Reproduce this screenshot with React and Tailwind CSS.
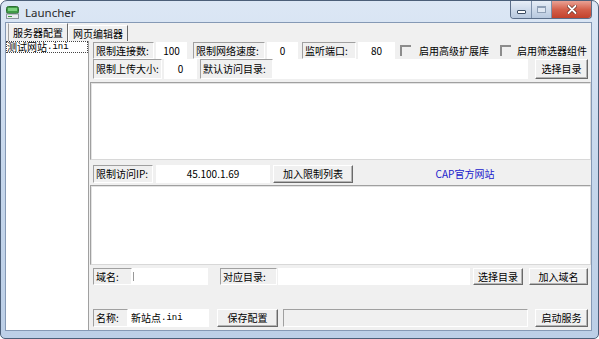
const mono = "font-['Liberation_Mono',monospace] text-[9px]";

function AppIcon() {
  return (
    <svg width="13" height="13" viewBox="0 0 13 13" className="ml-[5px] mt-[5px] shrink-0">
      <rect x="0.5" y="0.5" width="12" height="7" rx="2" fill="#3f9b45" stroke="#2d6e33" />
      <rect x="2" y="2" width="9" height="3" fill="#7cd07e" />
      <rect x="0.5" y="8" width="12" height="4.5" fill="#e9ecef" stroke="#8a939c" />
      <rect x="2" y="10" width="4" height="1" fill="#3f9b45" />
    </svg>
  );
}

function WindowButtons() {
  return (
    <div className="ml-auto mr-[6px] flex h-[18px] self-start overflow-hidden rounded-b-[4px] border border-t-0 border-[#5b6e89]">
      <div className="flex w-[21px] items-center justify-center border-r border-[#7d90aa] bg-linear-to-b from-[#e7eef7] to-[#b7c8de]">
        <div className="mt-[5px] h-[4px] w-[9px] rounded-[1px] border border-[#3c4d63] bg-white" />
      </div>
      <div className="flex w-[20px] items-center justify-center border-r border-[#7d90aa] bg-linear-to-b from-[#e7eef7] to-[#b7c8de]">
        <div className="h-[7px] w-[9px] border border-[#8fa0b6] border-t-2 bg-[#dfe7f2]" />
      </div>
      <div className="flex w-[39px] items-center justify-center bg-linear-to-b from-[#e9a194] via-[#d4604b] to-[#c2422c]">
        <svg width="10" height="9" viewBox="0 0 10 9">
          <path d="M1.5 1 L8.5 8 M8.5 1 L1.5 8" stroke="#5a1d12" strokeWidth="3.2" strokeLinecap="round" />
          <path d="M1.5 1 L8.5 8 M8.5 1 L1.5 8" stroke="#ffffff" strokeWidth="2" strokeLinecap="round" />
        </svg>
      </div>
    </div>
  );
}

function Label({ className = "", children }) {
  return (
    <div
      className={`flex h-full shrink-0 items-center whitespace-nowrap border border-b-white border-l-[#a0a0a0] border-r-white border-t-[#a0a0a0] pl-[2px] ${className}`}
    >
      {children}
    </div>
  );
}

function Field({ className = "", children }) {
  return (
    <div className={`flex h-full shrink-0 items-center whitespace-nowrap bg-white ${className}`}>{children}</div>
  );
}

function Button({ className = "", children }) {
  return (
    <div
      className={`flex h-full shrink-0 items-center justify-center whitespace-nowrap border border-b-[#6a6a6a] border-l-white border-r-[#6a6a6a] border-t-white bg-[#f0f0f0] shadow-[inset_-1px_-1px_0_#b4b4b4] ${className}`}
    >
      {children}
    </div>
  );
}

function Check({ className = "" }) {
  return (
    <div
      className={`h-[11px] w-[11px] shrink-0 border-2 border-b-0 border-r-0 border-l-[#8c8c8c] border-t-[#8c8c8c] ${className}`}
    />
  );
}

export default function App() {
  return (
    <div className="h-[339px] w-[599px] bg-white font-['Noto_Sans_CJK_SC',sans-serif] text-[10px] leading-none text-black">
      <div className="flex h-full flex-col rounded-b-[5px] rounded-t-[7px] border border-[#4c5f79] bg-linear-to-b from-[#dce7f5] via-[#c6d7ec] to-[#bccfe7]">
        <div className="flex h-[21px] shrink-0 items-start">
          <AppIcon />
          <span className="ml-[6px] mt-[6px] font-['Noto_Sans',sans-serif] text-[11.5px] leading-none text-[#2a2a2a]">
            Launcher
          </span>
          <WindowButtons />
        </div>

        <div className="mb-[7px] ml-[4px] mr-[6px] flex flex-1 flex-col border border-[#8599b5] bg-[#f0f0f0]">
          <div className="flex h-[18px] shrink-0 items-end pl-[2px]">
            <div className="flex h-[18px] w-[60px] items-center justify-center border-l border-r border-t border-l-[#a0a0a0] border-r-[#6a6a6a] border-t-white">
              服务器配置
            </div>
            <div className="flex h-[16px] w-[60px] items-center justify-center border-l border-r border-t border-l-white border-r-[#6a6a6a] border-t-white">
              网页编辑器
            </div>
          </div>

          <div className="flex flex-1">
            <div className="w-[83px] shrink-0 border-r border-[#a0a0a0] bg-white">
              <div className="flex h-[12px] items-center border border-dotted border-[#444]">
                测试网站<span className={mono}>.ini</span>
              </div>
            </div>

            <div className="ml-[1px] flex flex-1 flex-col">
              <div className="mt-[1px] flex h-[17px] items-center pl-[3px]">
                <Label className="w-[61px]">限制连接数:</Label>
                <Field className="ml-[2px] w-[31px] justify-center">100</Field>
                <Label className="ml-[6px] w-[72px]">限制网络速度:</Label>
                <Field className="ml-[2px] w-[31px] justify-center">0</Field>
                <Label className="ml-[4px] w-[54px]">监听端口:</Label>
                <Field className="ml-[2px] w-[37px] justify-center">80</Field>
                <Check className="ml-[5px]" />
                <span className="ml-[8px] whitespace-nowrap">启用高级扩展库</span>
                <Check className="ml-[11px]" />
                <span className="ml-[6px] whitespace-nowrap">启用筛选器组件</span>
              </div>

              <div className="flex h-[20px] items-end pl-[3px]">
                <Label className="h-[18px] w-[69px]">限制上传大小:</Label>
                <Field className="h-[18px] ml-[2px] w-[33px] justify-center">0</Field>
                <Label className="h-[18px] ml-[3px] w-[73px]">默认访问目录:</Label>
                <Field className="h-[18px] w-[255px]" />
                <Button className="ml-[7px] w-[53px]">选择目录</Button>
              </div>

              <div className="mt-[3px] h-[78px] border border-b-[#d8d8d8] border-l-[#a0a0a0] border-r-[#d8d8d8] border-t-[#a0a0a0] bg-white shadow-[inset_1px_1px_0_#e3e3e3]" />

              <div className="mt-[5px] flex h-[18px] items-center pl-[3px]">
                <Label className="w-[60px]">限制访问IP:</Label>
                <Field className="ml-[3px] w-[114px] justify-center">45.100.1.69</Field>
                <Button className="ml-[3px] w-[80px]">加入限制列表</Button>
                <div className="flex flex-1 justify-center pr-[14px] text-[#1a1acc]">CAP官方网站</div>
              </div>

              <div className="mt-[2px] h-[80px] border border-b-[#d8d8d8] border-l-[#a0a0a0] border-r-[#d8d8d8] border-t-[#a0a0a0] bg-white shadow-[inset_1px_1px_0_#e3e3e3]" />

              <div className="mt-[3px] flex h-[17px] items-center pl-[3px]">
                <Label className="w-[39px]">域名:</Label>
                <Field className="w-[76px]">
                  <div className="ml-[1px] h-[9px] w-[1px] bg-[#999]" />
                </Field>
                <Label className="ml-[12px] w-[57px]">对应目录:</Label>
                <Field className="ml-[1px] w-[192px]" />
                <Button className="ml-[3px] w-[50px]">选择目录</Button>
                <Button className="ml-[6px] w-[59px]">加入域名</Button>
              </div>

              <div className="mt-[24px] flex h-[18px] items-center pl-[3px]">
                <Label className="w-[35px]">名称:</Label>
                <Field className="w-[81px] pl-[3px]">
                  新站点<span className={mono}>.ini</span>
                </Field>
                <Button className="ml-[8px] w-[61px]">保存配置</Button>
                <div className="ml-[5px] h-full w-[245px] shrink-0 border border-b-white border-l-[#a0a0a0] border-r-white border-t-[#a0a0a0]" />
                <Button className="ml-[7px] w-[53px]">启动服务</Button>
              </div>
            </div>
          </div>
        </div>
      </div>
    </div>
  );
}
